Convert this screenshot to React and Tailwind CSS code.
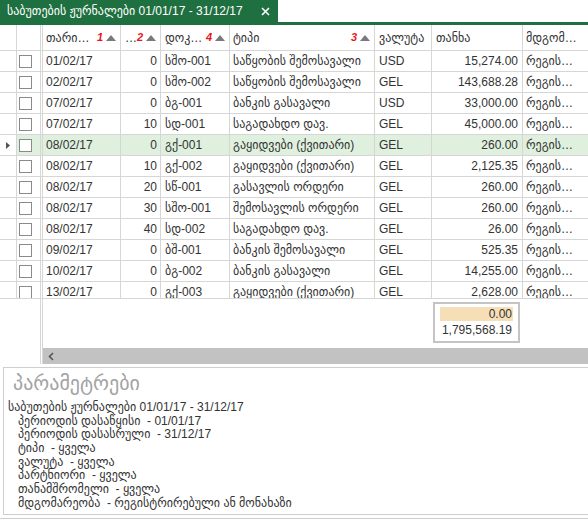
import React from 'react';

const rows = [
  ['01/02/17', '0', 'სშო-001', 'საწყობის შემოსავალი', 'USD', '15,274.00'],
  ['02/02/17', '0', 'სშო-002', 'საწყობის შემოსავალი', 'GEL', '143,688.28'],
  ['07/02/17', '0', 'ბგ-001', 'ბანკის გასავალი', 'USD', '33,000.00'],
  ['07/02/17', '10', 'სდ-001', 'საგადახდო დავ.', 'GEL', '45,000.00'],
  ['08/02/17', '0', 'გქ-001', 'გაყიდვები (ქვითარი)', 'GEL', '260.00'],
  ['08/02/17', '10', 'გქ-002', 'გაყიდვები (ქვითარი)', 'GEL', '2,125.35'],
  ['08/02/17', '20', 'სწ-001', 'გასავლის ორდერი', 'GEL', '260.00'],
  ['08/02/17', '30', 'სშო-001', 'შემოსავლის ორდერი', 'GEL', '260.00'],
  ['08/02/17', '40', 'სდ-002', 'საგადახდო დავ.', 'GEL', '26.00'],
  ['09/02/17', '0', 'ბშ-001', 'ბანკის შემოსავალი', 'GEL', '525.35'],
  ['10/02/17', '0', 'ბგ-002', 'ბანკის გასავალი', 'GEL', '14,255.00'],
  ['13/02/17', '0', 'გქ-003', 'გაყიდვები (ქვითარი)', 'GEL', '2,628.00'],
];

const params = [
  'პერიოდის დასაწყისი  - 01/01/17',
  'პერიოდის დასასრული  - 31/12/17',
  'ტიპი  - ყველა',
  'ვალუტა  - ყველა',
  'პარტნიორი  - ყველა',
  'თანამშრომელი  - ყველა',
  'მდგომარეობა  - რეგისტრირებული ან მონახაზი',
];

// sort arrow in the header
const SortUp = () => (
  <svg width="10" height="6" viewBox="0 0 10 6" className="shrink-0">
    <path d="M0 6 L5 0 L10 6 Z" fill="#7a7a7a" />
  </svg>
);

const Idx = ({ n }) => (
  <span className="text-[11px] font-bold italic text-[#e8141b] leading-none mr-[3px]">{n}</span>
);

const cell = 'shrink-0 h-full border-r border-b border-[#d6d6d6] flex items-center overflow-hidden whitespace-nowrap';

export default function App() {
  return (
    <div className="w-[588px] h-[519px] overflow-hidden bg-white text-[12px] text-[#333] font-['Liberation_Sans','DejaVu_Sans',sans-serif]">
      {/* tab strip */}
      <div className="flex h-[22px]">
        <div className="w-[278px] bg-[#1f7040] text-white flex items-center pl-[7px] pr-[8px]">
          <span className="flex-1 whitespace-nowrap">საბუთების ჟურნალები 01/01/17 - 31/12/17</span>
          <svg width="9" height="9" viewBox="0 0 9 9">
            <path d="M1 1 L8 8 M8 1 L1 8" stroke="white" strokeWidth="1.6" />
          </svg>
        </div>
      </div>
      <div className="h-[3px] bg-[#1f7040]" />

      {/* header */}
      <div className="flex h-[26px] w-[640px]">
        <div className={`${cell} w-[17px]`} />
        <div className={`${cell} w-[24px]`} />
        <div className={`${cell} w-[2px]`} />
        <div className={`${cell} w-[78px] pl-[3px] pr-[4px]`}>
          <span className="flex-1">თარი…</span><Idx n="1" /><SortUp />
        </div>
        <div className={`${cell} w-[40px] pl-[4px] pr-[4px]`}>
          <span className="flex-1">…</span><Idx n="2" /><SortUp />
        </div>
        <div className={`${cell} w-[69px] pl-[4px] pr-[4px]`}>
          <span className="flex-1">დოკ…</span><Idx n="4" /><SortUp />
        </div>
        <div className={`${cell} w-[145px] pl-[3px] pr-[4px]`}>
          <span className="flex-1">ტიპი</span><Idx n="3" /><SortUp />
        </div>
        <div className={`${cell} w-[57px] pl-[4px]`}>ვალუტა</div>
        <div className={`${cell} w-[91px] pl-[4px]`}>თანხა</div>
        <div className={`${cell} w-[90px] pl-[3px]`}>მდგომ…</div>
      </div>

      {/* rows */}
      <div className="h-[247px] overflow-hidden">
        {rows.map((r, i) => {
          const sel = i === 4;
          return (
            <div key={i} className={`flex h-[21px] w-[640px] ${sel ? 'bg-[#dff0de]' : ''}`}>
              <div className={`${cell} w-[17px] bg-white justify-center`}>
                {sel && (
                  <svg width="4" height="7" viewBox="0 0 4 7">
                    <path d="M0 0 L4 3.5 L0 7 Z" fill="#555" />
                  </svg>
                )}
              </div>
              <div className={`${cell} w-[24px] pl-[2px]`}>
                <div className="w-[13px] h-[13px] border border-[#8a8a8a] bg-white" />
              </div>
              <div className={`${cell} w-[2px]`} />
              <div className={`${cell} w-[78px] pl-[3px]`}>{r[0]}</div>
              <div className={`${cell} w-[40px] pr-[3px] justify-end`}>{r[1]}</div>
              <div className={`${cell} w-[69px] pl-[4px]`}>{r[2]}</div>
              <div className={`${cell} w-[145px] pl-[3px]`}>{r[3]}</div>
              <div className={`${cell} w-[57px] pl-[4px]`}>{r[4]}</div>
              <div className={`${cell} w-[91px] pr-[4px] justify-end`}>{r[5]}</div>
              <div className={`${cell} w-[90px] pl-[3px]`}>რეგის…</div>
            </div>
          );
        })}
      </div>

      {/* footer + scrollbar */}
      <div className="flex border-t border-[#d6d6d6]">
        <div className="w-[41px] shrink-0 border-r border-[#d6d6d6]" />
        <div className="w-[2px] shrink-0 border-r border-[#d6d6d6]" />
        <div className="flex-1 flex flex-col">
          <div className="h-[49px] pt-[3px] pl-[390px]">
            <div className="w-[87px] h-[41px] border-2 border-[#c4c4c4] px-[5px] pt-[3px] flex flex-col">
              <div className="h-[14px] bg-[#f6dfb6] flex items-center justify-end pr-[1px]">0.00</div>
              <div className="h-[18px] flex items-center justify-end pr-[1px]">1,795,568.19</div>
            </div>
          </div>
          <div className="h-[16px] bg-[#c2c2c2] flex items-center pl-[5px]">
            <svg width="6" height="9" viewBox="0 0 6 9">
              <path d="M5 1 L1.5 4.5 L5 8" stroke="#555" strokeWidth="1.6" fill="none" />
            </svg>
          </div>
        </div>
      </div>

      {/* parameters panel */}
      <div className="mt-[3px] ml-[3px] h-[148px] border border-r-0 border-[#cfcfcf] pl-[4px]">
        <div className="pl-[5px] pt-[3px] text-[20px] leading-[25px] text-[#a3a3a3]">პარამეტრები</div>
        <div className="mt-[5px] leading-[13.66px] whitespace-pre">
          <div>საბუთების ჟურნალები 01/01/17 - 31/12/17</div>
          {params.map((p, i) => (
            <div key={i} className="pl-[10px]">{p}</div>
          ))}
        </div>
      </div>
      <div className="mt-[3px] border-t border-[#cfcfcf]" />
    </div>
  );
}
